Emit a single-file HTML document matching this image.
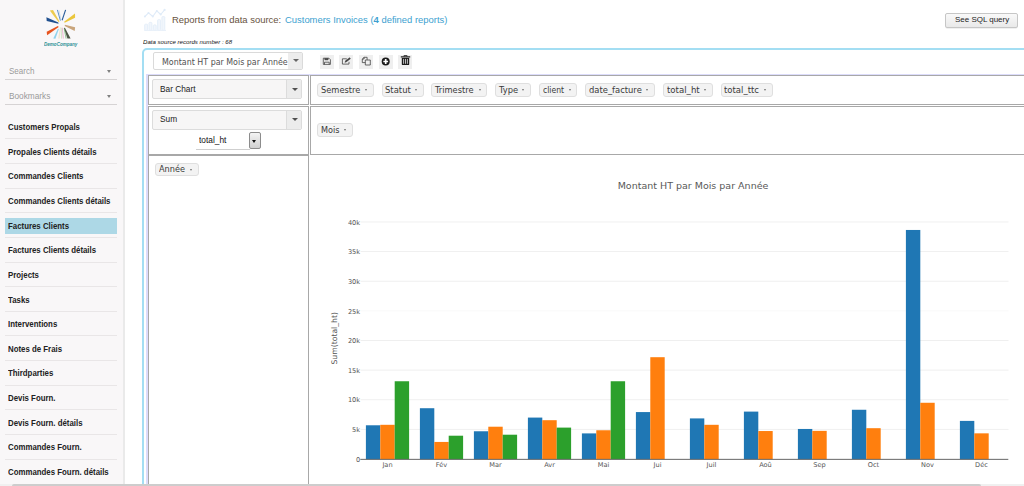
<!DOCTYPE html>
<html lang="fr"><head><meta charset="utf-8"><title>Reports</title><style>
html,body{margin:0;padding:0;}
body{width:1024px;height:486px;overflow:hidden;background:#fff;position:relative;font-family:"Liberation Sans",Arial,sans-serif;color:#222;}
.abs{position:absolute;}
#side{left:0;top:0;width:122.7px;height:486px;background:#f9f7f8;border-right:2.3px solid #eaeaea;}
.hl{position:absolute;left:4.7px;width:112.2px;height:15.7px;background:#add8e6;}
.sep{position:absolute;left:5px;width:112px;height:1px;background:#e9e6e7;}
.uline{position:absolute;left:4.5px;width:112.5px;height:1px;background:#d6d3d4;}
.caret{position:absolute;width:0;height:0;border-left:2.5px solid transparent;border-right:2.5px solid transparent;border-top:3px solid #808080;}
.t{position:absolute;white-space:nowrap;}
.cell{position:absolute;border:1px solid #a8a8a8;box-sizing:border-box;background:#fff;}
.combo{position:absolute;box-sizing:border-box;border:1px solid #dcdcdc;border-radius:2px;background:#f7f6f6;}
.combo .btn{position:absolute;right:0;top:0;bottom:0;width:14px;border-left:1px solid #dcdcdc;background:#ececec;border-radius:0 2px 2px 0;}
.tag{position:absolute;box-sizing:border-box;border:1px solid #dfdfdf;border-radius:3px;background:#f3f3f3;}
</style></head><body>
<div id="side" class="abs">
<svg class="abs" style="left:36px;top:4px" width="52" height="48" viewBox="36 4 52 48">
<polygon points="49.8,10.4 53.0,9.9 59.5,21.6 58.5,22.0" fill="#eccb4f"/>
<polygon points="46.4,17.3 46.7,21.0 58.5,23.8 58.3,22.4" fill="#20508f"/>
<polygon points="75.0,13.4 75.1,17.8 64.7,22.8 64.1,21.8" fill="#ebc63c"/>
<polygon points="75.1,27.2 74.7,30.9 64.7,25.9 64.9,24.8" fill="#c9a57c"/>
<polygon points="46.7,31.7 47.1,35.2 58.7,26.9 57.9,25.9" fill="#e8541e"/>
<polygon points="53.3,38.6 55.4,38.8 58.9,28.9 57.9,28.7" fill="#8fd3ee"/>
<polygon points="67.4,38.6 70.6,38.6 64.9,27.7 63.9,28.1" fill="#4d5646"/>
<polygon points="58.2,38.6 59.7,38.6 60.7,27.2 60.0,27.2" fill="#efe6cf"/>
<line x1="57.4" y1="9.9" x2="60.4" y2="20.6" stroke="#5b8fc9" stroke-width="1.0"/>
<line x1="65.6" y1="9.9" x2="62.1" y2="20.3" stroke="#2a5c9a" stroke-width="1.1"/>
<line x1="58.9" y1="10.1" x2="60.9" y2="19.8" stroke="#9fc4e6" stroke-width="0.5"/>
<line x1="62.3" y1="27.7" x2="63.3" y2="38.6" stroke="#e79cc0" stroke-width="0.7"/>
<line x1="61.2" y1="27.7" x2="61.5" y2="38.6" stroke="#b8d9a8" stroke-width="0.6"/>
<line x1="64.2" y1="28.7" x2="66.1" y2="38.6" stroke="#5aa05a" stroke-width="0.6"/>
</svg>
<div class="t" style="left:44.0px;top:41.20px;font-family:'Liberation Sans',Arial,sans-serif;font-size:5.2px;line-height:6.8px;letter-spacing:0.000px;color:#2f9296;font-weight:bold;font-style:italic;transform:scaleX(0.8775);transform-origin:0 50%;">DemoCompany</div>
<div class="t" style="left:8.7px;top:67.45px;font-family:'Liberation Sans',Arial,sans-serif;font-size:8.2px;line-height:10.7px;letter-spacing:0.000px;color:#9a9a9a;font-weight:normal;font-style:normal;transform:scaleX(0.9787);transform-origin:0 50%;">Search</div>
<div class="caret" style="left:107.3px;top:70.3px"></div><div class="uline" style="top:79.1px"></div>
<div class="t" style="left:8.7px;top:92.05px;font-family:'Liberation Sans',Arial,sans-serif;font-size:8.2px;line-height:10.7px;letter-spacing:0.000px;color:#9a9a9a;font-weight:normal;font-style:normal;transform:scaleX(1.0109);transform-origin:0 50%;">Bookmarks</div>
<div class="caret" style="left:107.3px;top:95.0px"></div><div class="uline" style="top:103.8px"></div>
<div class="t" style="left:8.4px;top:122.10px;font-family:'Liberation Sans',Arial,sans-serif;font-size:8.4px;line-height:10.9px;letter-spacing:0.000px;color:#222;font-weight:bold;font-style:normal;transform:scaleX(0.9370);transform-origin:0 50%;">Customers Propals</div>
<div class="sep" style="top:138.40px"></div>
<div class="t" style="left:8.4px;top:146.73px;font-family:'Liberation Sans',Arial,sans-serif;font-size:8.4px;line-height:10.9px;letter-spacing:0.000px;color:#222;font-weight:bold;font-style:normal;transform:scaleX(0.9370);transform-origin:0 50%;">Propales Clients détails</div>
<div class="sep" style="top:163.03px"></div>
<div class="t" style="left:8.4px;top:171.36px;font-family:'Liberation Sans',Arial,sans-serif;font-size:8.4px;line-height:10.9px;letter-spacing:0.000px;color:#222;font-weight:bold;font-style:normal;transform:scaleX(0.9370);transform-origin:0 50%;">Commandes Clients</div>
<div class="sep" style="top:187.66px"></div>
<div class="t" style="left:8.4px;top:195.99px;font-family:'Liberation Sans',Arial,sans-serif;font-size:8.4px;line-height:10.9px;letter-spacing:0.000px;color:#222;font-weight:bold;font-style:normal;transform:scaleX(0.9370);transform-origin:0 50%;">Commandes Clients détails</div>
<div class="sep" style="top:212.29px"></div>
<div class="hl" style="top:217.92px"></div>
<div class="t" style="left:8.4px;top:220.62px;font-family:'Liberation Sans',Arial,sans-serif;font-size:8.4px;line-height:10.9px;letter-spacing:0.000px;color:#222;font-weight:bold;font-style:normal;transform:scaleX(0.9370);transform-origin:0 50%;">Factures Clients</div>
<div class="sep" style="top:236.92px"></div>
<div class="t" style="left:8.4px;top:245.25px;font-family:'Liberation Sans',Arial,sans-serif;font-size:8.4px;line-height:10.9px;letter-spacing:0.000px;color:#222;font-weight:bold;font-style:normal;transform:scaleX(0.9370);transform-origin:0 50%;">Factures Clients détails</div>
<div class="sep" style="top:261.55px"></div>
<div class="t" style="left:8.4px;top:269.88px;font-family:'Liberation Sans',Arial,sans-serif;font-size:8.4px;line-height:10.9px;letter-spacing:0.000px;color:#222;font-weight:bold;font-style:normal;transform:scaleX(0.9370);transform-origin:0 50%;">Projects</div>
<div class="sep" style="top:286.18px"></div>
<div class="t" style="left:8.4px;top:294.51px;font-family:'Liberation Sans',Arial,sans-serif;font-size:8.4px;line-height:10.9px;letter-spacing:0.000px;color:#222;font-weight:bold;font-style:normal;transform:scaleX(0.9370);transform-origin:0 50%;">Tasks</div>
<div class="sep" style="top:310.81px"></div>
<div class="t" style="left:8.4px;top:319.14px;font-family:'Liberation Sans',Arial,sans-serif;font-size:8.4px;line-height:10.9px;letter-spacing:0.000px;color:#222;font-weight:bold;font-style:normal;transform:scaleX(0.9370);transform-origin:0 50%;">Interventions</div>
<div class="sep" style="top:335.44px"></div>
<div class="t" style="left:8.4px;top:343.77px;font-family:'Liberation Sans',Arial,sans-serif;font-size:8.4px;line-height:10.9px;letter-spacing:0.000px;color:#222;font-weight:bold;font-style:normal;transform:scaleX(0.9370);transform-origin:0 50%;">Notes de Frais</div>
<div class="sep" style="top:360.07px"></div>
<div class="t" style="left:8.4px;top:368.40px;font-family:'Liberation Sans',Arial,sans-serif;font-size:8.4px;line-height:10.9px;letter-spacing:0.000px;color:#222;font-weight:bold;font-style:normal;transform:scaleX(0.9370);transform-origin:0 50%;">Thirdparties</div>
<div class="sep" style="top:384.70px"></div>
<div class="t" style="left:8.4px;top:393.03px;font-family:'Liberation Sans',Arial,sans-serif;font-size:8.4px;line-height:10.9px;letter-spacing:0.000px;color:#222;font-weight:bold;font-style:normal;transform:scaleX(0.9370);transform-origin:0 50%;">Devis Fourn.</div>
<div class="sep" style="top:409.33px"></div>
<div class="t" style="left:8.4px;top:417.66px;font-family:'Liberation Sans',Arial,sans-serif;font-size:8.4px;line-height:10.9px;letter-spacing:0.000px;color:#222;font-weight:bold;font-style:normal;transform:scaleX(0.9370);transform-origin:0 50%;">Devis Fourn. détails</div>
<div class="sep" style="top:433.96px"></div>
<div class="t" style="left:8.4px;top:442.29px;font-family:'Liberation Sans',Arial,sans-serif;font-size:8.4px;line-height:10.9px;letter-spacing:0.000px;color:#222;font-weight:bold;font-style:normal;transform:scaleX(0.9370);transform-origin:0 50%;">Commandes Fourn.</div>
<div class="sep" style="top:458.59px"></div>
<div class="t" style="left:8.4px;top:466.92px;font-family:'Liberation Sans',Arial,sans-serif;font-size:8.4px;line-height:10.9px;letter-spacing:0.000px;color:#222;font-weight:bold;font-style:normal;transform:scaleX(0.9370);transform-origin:0 50%;">Commandes Fourn. détails</div>
</div>
<svg class="abs" style="left:138px;top:4px" width="40" height="32" viewBox="138 4 40 32">
<g fill="#f1f6fc" stroke="#e3edf8" stroke-width="0.9">
<rect x="144.7" y="24.2" width="2.9" height="6.2" rx="0.8"/>
<rect x="149.0" y="22.4" width="2.9" height="8" rx="0.8"/>
<rect x="153.3" y="24.9" width="2.9" height="5.5" rx="0.8"/>
<rect x="157.6" y="19.6" width="2.9" height="10.8" rx="0.8"/>
<rect x="161.9" y="16.6" width="2.9" height="13.8" rx="0.8"/>
</g>
<rect x="144.2" y="30.0" width="21.8" height="0.9" fill="#e8f0f9"/>
<polyline points="144.9,16.5 148.5,12.9 152.8,16.5 156.8,10.9 160.7,14.5 164.6,9.9" fill="none" stroke="#dfebf8" stroke-width="1.1" stroke-linejoin="round"/>
<g fill="#dfebf8"><circle cx="144.9" cy="16.5" r="1"/><circle cx="148.5" cy="12.9" r="1"/><circle cx="152.8" cy="16.5" r="1"/><circle cx="156.8" cy="10.9" r="1"/><circle cx="160.7" cy="14.5" r="1"/><circle cx="164.6" cy="9.9" r="1.1"/></g>
</svg>
<div class="t" style="left:172.0px;top:13.75px;font-family:'Liberation Sans',Arial,sans-serif;font-size:9.5px;line-height:12.3px;letter-spacing:0.000px;color:#685240;font-weight:normal;font-style:normal;transform:scaleX(0.9943);transform-origin:0 50%;">Reports from data source:</div>
<div class="t" style="left:284.8px;top:13.75px;font-family:'Liberation Sans',Arial,sans-serif;font-size:9.5px;line-height:12.3px;letter-spacing:0.000px;color:#3d9fd0;font-weight:normal;font-style:normal;transform:scaleX(0.9921);transform-origin:0 50%;">Customers Invoices (<b>4</b> defined reports)</div>
<div class="t" style="left:142.9px;top:38.25px;font-family:'Liberation Sans',Arial,sans-serif;font-size:6.1px;line-height:7.9px;letter-spacing:0.000px;color:#111;font-weight:normal;font-style:italic;transform:scaleX(1.0001);transform-origin:0 50%;">Data source records number : 68</div>
<div class="abs" style="left:945.3px;top:13px;width:72.6px;height:14.5px;box-sizing:border-box;border:1px solid #c6c6c6;box-shadow:0 0.5px 0.5px rgba(0,0,0,0.12);border-radius:2px;background:linear-gradient(#f9f9f9,#e9e9e9)"></div>
<div class="t" style="left:954.8px;top:15.10px;font-family:'Liberation Sans',Arial,sans-serif;font-size:8.0px;line-height:10.4px;letter-spacing:0.000px;color:#222;font-weight:normal;font-style:normal;transform:scaleX(0.9962);transform-origin:0 50%;">See SQL query</div>
<div class="abs" style="left:142px;top:48px;width:900px;height:460px;box-sizing:border-box;border:2px solid #a3def3;border-radius:5px;background:#fff"></div>
<div class="abs" style="left:153px;top:52px;width:150.2px;height:17.8px;box-sizing:border-box;border:1px solid #dadada;border-radius:2px;background:#fff"></div>
<div class="abs" style="left:288.3px;top:53px;width:13.9px;height:15.8px;background:#ededed;border-radius:0 1px 1px 0"></div>
<div class="abs" style="left:155px;top:53px;width:133.3px;height:15.8px;overflow:hidden"><div class="t" style="left:7.2px;top:4.25px;font-family:'DejaVu Sans',Verdana,sans-serif;font-size:8.1px;line-height:10.5px;letter-spacing:0.000px;color:#505050;font-weight:normal;font-style:normal;transform:scaleX(0.9789);transform-origin:0 50%;">Montant HT par Mois par Année</div></div>
<div class="caret" style="left:293.3px;top:59.2px;border-top-color:#666;border-left-width:3.2px;border-right-width:3.2px;border-top-width:3.4px"></div>
<div class="abs" style="left:319.6px;top:54.7px;width:14.3px;height:14px;background:#efefef"></div>
<div class="abs" style="left:339.4px;top:54.7px;width:13.7px;height:14px;background:#efefef"></div>
<div class="abs" style="left:359.2px;top:54.7px;width:13.7px;height:14px;background:#efefef"></div>
<div class="abs" style="left:379.0px;top:54.7px;width:13.7px;height:14px;background:#efefef"></div>
<div class="abs" style="left:398.1px;top:54.7px;width:14.1px;height:14px;background:#efefef"></div>
<svg class="abs" style="left:316px;top:50px" width="100" height="22" viewBox="316 50 100 22">
<g fill="none" stroke="#3a3a3a" stroke-width="0.75" stroke-linejoin="round">
<path d="M323.3 58.2h5.6l1.5 1.5v4.7h-7.1z"/>
<path d="M324.8 58.2v1.7h3.3v-1.7" fill="#444" stroke-width="0.5"/>
<path d="M324.5 64.4v-2.2h4.7v2.2"/>
<path d="M349 61.8v2.3h-6.6v-5.3h4.4"/>
<path d="M344.8 62.5l.5-1.7 4.3-3.2 1 1.1-4.2 3.2z" fill="#444" stroke-width="0.2"/>
<path d="M365.3 60h5v5h-5z" fill="#efefef"/>
<path d="M365.3 62.6h-3V59l1.8-1.7h3v2.6"/>
<path d="M362.3 59h1.8v-1.7"/>
</g>
<circle cx="385.7" cy="61.5" r="4" fill="#1a1a1a"/>
<path d="M385.7 59.1v4.8M383.3 61.5h4.8" stroke="#fff" stroke-width="1.7"/>
<g fill="#1a1a1a">
<rect x="400.8" y="56.3" width="9.4" height="1.2"/>
<path d="M403.7 56.4v-1.2h3.6v1.2h-.9v-.5h-1.8v.5z"/>
<path d="M401.8 58h7.4v6.2q0 .9-.9.9h-5.6q-.9 0-.9-.9z"/>
</g>
<path d="M403.6 58.9v4.9M405.5 58.9v4.9M407.4 58.9v4.9" stroke="#dcdcdc" stroke-width="0.85"/>
</svg>
<div class="abs" style="left:146px;top:74px;width:900px;height:1.6px;background:#dcdcfb"></div>
<div class="abs" style="left:146px;top:74px;width:2px;height:420px;background:#dcdcfb"></div>
<div class="cell" style="left:148px;top:75.4px;width:161px;height:29.2px"></div>
<div class="cell" style="left:310px;top:75.4px;width:730px;height:29.2px"></div>
<div class="cell" style="left:148px;top:105.5px;width:161px;height:49px"></div>
<div class="cell" style="left:310px;top:105.5px;width:730px;height:49px"></div>
<div class="cell" style="left:148px;top:155.2px;width:161px;height:340px"></div>
<div class="combo" style="left:152px;top:79.2px;width:150px;height:19.7px"><div class="btn"></div><div class="caret" style="left:138.5px;top:7.4px;border-top-color:#505050;border-left-width:3.5px;border-right-width:3.5px;border-top-width:3.7px"></div></div>
<div class="t" style="left:159.9px;top:83.80px;font-family:'Liberation Sans',Arial,sans-serif;font-size:8.3px;line-height:10.8px;letter-spacing:0.000px;color:#222;font-weight:normal;font-style:normal;transform:scaleX(1.0001);transform-origin:0 50%;">Bar Chart</div>
<div class="combo" style="left:152px;top:109.9px;width:150px;height:19.7px"><div class="btn"></div><div class="caret" style="left:138.5px;top:7.4px;border-top-color:#505050;border-left-width:3.5px;border-right-width:3.5px;border-top-width:3.7px"></div></div>
<div class="t" style="left:159.9px;top:113.90px;font-family:'Liberation Sans',Arial,sans-serif;font-size:8.3px;line-height:10.8px;letter-spacing:0.000px;color:#222;font-weight:normal;font-style:normal;transform:scaleX(1.0001);transform-origin:0 50%;">Sum</div>
<div class="t" style="left:198.6px;top:135.10px;font-family:'Liberation Sans',Arial,sans-serif;font-size:8.3px;line-height:10.8px;letter-spacing:0.000px;color:#111;font-weight:normal;font-style:normal;transform:scaleX(1.0067);transform-origin:0 50%;">total_ht</div>
<div class="abs" style="left:195.5px;top:148.7px;width:54px;height:1px;background:#cfcfcf"></div>
<div class="abs" style="left:249.2px;top:132.3px;width:11.5px;height:17px;box-sizing:border-box;border:1px solid #8c8c8c;border-radius:2px;background:linear-gradient(#f4f4f4,#d0d0d0)"><div class="caret" style="left:1.9px;top:6.4px;border-top-color:#111;border-left-width:2.9px;border-right-width:2.9px;border-top-width:3.2px"></div></div>
<div class="tag" style="left:317.0px;top:83.3px;width:56.7px;height:13.4px"></div><div class="t" style="left:321.0px;top:84.85px;font-family:'DejaVu Sans',Verdana,sans-serif;font-size:8.2px;line-height:10.7px;letter-spacing:0.000px;color:#3a3a3a;font-weight:normal;font-style:normal;transform:scaleX(1.0115);transform-origin:0 50%;">Semestre</div><div class="caret" style="left:364.6px;top:89.1px;border-top-color:#707070;border-left-width:1.9px;border-right-width:1.9px;border-top-width:2.4px"></div>
<div class="tag" style="left:381.5px;top:83.3px;width:42.2px;height:13.4px"></div><div class="t" style="left:385.0px;top:84.85px;font-family:'DejaVu Sans',Verdana,sans-serif;font-size:8.2px;line-height:10.7px;letter-spacing:0.000px;color:#3a3a3a;font-weight:normal;font-style:normal;transform:scaleX(1.0301);transform-origin:0 50%;">Statut</div><div class="caret" style="left:414.7px;top:89.1px;border-top-color:#707070;border-left-width:1.9px;border-right-width:1.9px;border-top-width:2.4px"></div>
<div class="tag" style="left:431.2px;top:83.3px;width:56.2px;height:13.4px"></div><div class="t" style="left:434.7px;top:84.85px;font-family:'DejaVu Sans',Verdana,sans-serif;font-size:8.2px;line-height:10.7px;letter-spacing:0.000px;color:#3a3a3a;font-weight:normal;font-style:normal;transform:scaleX(1.0116);transform-origin:0 50%;">Trimestre</div><div class="caret" style="left:478.5px;top:89.1px;border-top-color:#707070;border-left-width:1.9px;border-right-width:1.9px;border-top-width:2.4px"></div>
<div class="tag" style="left:494.9px;top:83.3px;width:36.6px;height:13.4px"></div><div class="t" style="left:498.9px;top:84.85px;font-family:'DejaVu Sans',Verdana,sans-serif;font-size:8.2px;line-height:10.7px;letter-spacing:0.000px;color:#3a3a3a;font-weight:normal;font-style:normal;transform:scaleX(1.0206);transform-origin:0 50%;">Type</div><div class="caret" style="left:522.3px;top:89.1px;border-top-color:#707070;border-left-width:1.9px;border-right-width:1.9px;border-top-width:2.4px"></div>
<div class="tag" style="left:539.4px;top:83.3px;width:38.1px;height:13.4px"></div><div class="t" style="left:542.7px;top:84.85px;font-family:'DejaVu Sans',Verdana,sans-serif;font-size:8.2px;line-height:10.7px;letter-spacing:0.000px;color:#3a3a3a;font-weight:normal;font-style:normal;transform:scaleX(0.9378);transform-origin:0 50%;">client</div><div class="caret" style="left:568.5px;top:89.1px;border-top-color:#707070;border-left-width:1.9px;border-right-width:1.9px;border-top-width:2.4px"></div>
<div class="tag" style="left:585.1px;top:83.3px;width:69.8px;height:13.4px"></div><div class="t" style="left:588.9px;top:84.85px;font-family:'DejaVu Sans',Verdana,sans-serif;font-size:8.2px;line-height:10.7px;letter-spacing:0.000px;color:#3a3a3a;font-weight:normal;font-style:normal;transform:scaleX(1.0234);transform-origin:0 50%;">date_facture</div><div class="caret" style="left:646.4px;top:89.1px;border-top-color:#707070;border-left-width:1.9px;border-right-width:1.9px;border-top-width:2.4px"></div>
<div class="tag" style="left:662.8px;top:83.3px;width:50.0px;height:13.4px"></div><div class="t" style="left:666.9px;top:84.85px;font-family:'DejaVu Sans',Verdana,sans-serif;font-size:8.2px;line-height:10.7px;letter-spacing:0.000px;color:#3a3a3a;font-weight:normal;font-style:normal;transform:scaleX(1.0474);transform-origin:0 50%;">total_ht</div><div class="caret" style="left:704.1px;top:89.1px;border-top-color:#707070;border-left-width:1.9px;border-right-width:1.9px;border-top-width:2.4px"></div>
<div class="tag" style="left:720.5px;top:83.3px;width:52.0px;height:13.4px"></div><div class="t" style="left:724.3px;top:84.85px;font-family:'DejaVu Sans',Verdana,sans-serif;font-size:8.2px;line-height:10.7px;letter-spacing:0.000px;color:#3a3a3a;font-weight:normal;font-style:normal;transform:scaleX(1.0370);transform-origin:0 50%;">total_ttc</div><div class="caret" style="left:763.8px;top:89.1px;border-top-color:#707070;border-left-width:1.9px;border-right-width:1.9px;border-top-width:2.4px"></div>
<div class="tag" style="left:316.9px;top:123.4px;width:35.7px;height:13.2px"></div><div class="t" style="left:320.7px;top:124.85px;font-family:'DejaVu Sans',Verdana,sans-serif;font-size:8.2px;line-height:10.7px;letter-spacing:0.000px;color:#3a3a3a;font-weight:normal;font-style:normal;transform:scaleX(0.9933);transform-origin:0 50%;">Mois</div><div class="caret" style="left:343.6px;top:129.1px;border-top-color:#707070;border-left-width:1.9px;border-right-width:1.9px;border-top-width:2.4px"></div>
<div class="tag" style="left:155.2px;top:162.8px;width:43.4px;height:13.2px"></div><div class="t" style="left:159.2px;top:164.25px;font-family:'DejaVu Sans',Verdana,sans-serif;font-size:8.2px;line-height:10.7px;letter-spacing:0.000px;color:#3a3a3a;font-weight:normal;font-style:normal;transform:scaleX(0.9976);transform-origin:0 50%;">Année</div><div class="caret" style="left:189.7px;top:168.5px;border-top-color:#707070;border-left-width:1.9px;border-right-width:1.9px;border-top-width:2.4px"></div>
<svg class="abs" style="left:310px;top:160px" width="714" height="326" viewBox="310 160 714 326" font-family="'DejaVu Sans',Verdana,sans-serif"><rect x="360.5" y="428.92" width="648" height="0.9" fill="#eeeeee"/><rect x="360.5" y="399.29" width="648" height="0.9" fill="#eeeeee"/><rect x="360.5" y="369.66" width="648" height="0.9" fill="#eeeeee"/><rect x="360.5" y="340.03" width="648" height="0.9" fill="#eeeeee"/><rect x="360.5" y="310.40" width="648" height="0.9" fill="#f8f8f8"/><rect x="360.5" y="280.77" width="648" height="0.9" fill="#eeeeee"/><rect x="360.5" y="251.14" width="648" height="0.9" fill="#eeeeee"/><rect x="360.5" y="221.51" width="648" height="0.9" fill="#eeeeee"/><text x="360.1" y="461.70" text-anchor="end" font-size="6.6" fill="#555">0</text><text x="360.1" y="432.07" text-anchor="end" font-size="6.6" fill="#555">5k</text><text x="360.1" y="402.44" text-anchor="end" font-size="6.6" fill="#555">10k</text><text x="360.1" y="372.81" text-anchor="end" font-size="6.6" fill="#555">15k</text><text x="360.1" y="343.18" text-anchor="end" font-size="6.6" fill="#555">20k</text><text x="360.1" y="313.55" text-anchor="end" font-size="6.6" fill="#555">25k</text><text x="360.1" y="283.92" text-anchor="end" font-size="6.6" fill="#555">30k</text><text x="360.1" y="254.29" text-anchor="end" font-size="6.6" fill="#555">35k</text><text x="360.1" y="224.66" text-anchor="end" font-size="6.6" fill="#555">40k</text><rect x="365.90" y="425.28" width="14.4" height="34.02" fill="#1f77b4"/><rect x="380.30" y="424.81" width="14.4" height="34.49" fill="#ff7f0e"/><rect x="394.70" y="381.25" width="14.4" height="78.05" fill="#2ca02c"/><text x="387.50" y="466.9" text-anchor="middle" font-size="6.6" fill="#555">Jan</text><rect x="419.90" y="408.22" width="14.4" height="51.08" fill="#1f77b4"/><rect x="434.30" y="441.94" width="14.4" height="17.36" fill="#ff7f0e"/><rect x="448.70" y="435.71" width="14.4" height="23.59" fill="#2ca02c"/><text x="441.50" y="466.9" text-anchor="middle" font-size="6.6" fill="#555">Fév</text><rect x="473.90" y="431.27" width="14.4" height="28.03" fill="#1f77b4"/><rect x="488.30" y="426.71" width="14.4" height="32.59" fill="#ff7f0e"/><rect x="502.70" y="434.71" width="14.4" height="24.59" fill="#2ca02c"/><text x="495.50" y="466.9" text-anchor="middle" font-size="6.6" fill="#555">Mar</text><rect x="527.90" y="417.58" width="14.4" height="41.72" fill="#1f77b4"/><rect x="542.30" y="420.19" width="14.4" height="39.11" fill="#ff7f0e"/><rect x="556.70" y="427.60" width="14.4" height="31.70" fill="#2ca02c"/><text x="549.50" y="466.9" text-anchor="middle" font-size="6.6" fill="#555">Avr</text><rect x="581.90" y="433.40" width="14.4" height="25.90" fill="#1f77b4"/><rect x="596.30" y="430.26" width="14.4" height="29.04" fill="#ff7f0e"/><rect x="610.70" y="381.25" width="14.4" height="78.05" fill="#2ca02c"/><text x="603.50" y="466.9" text-anchor="middle" font-size="6.6" fill="#555">Mai</text><rect x="635.90" y="412.07" width="14.4" height="47.23" fill="#1f77b4"/><rect x="650.30" y="357.20" width="14.4" height="102.10" fill="#ff7f0e"/><text x="657.50" y="466.9" text-anchor="middle" font-size="6.6" fill="#555">Jui</text><rect x="689.90" y="418.41" width="14.4" height="40.89" fill="#1f77b4"/><rect x="704.30" y="424.81" width="14.4" height="34.49" fill="#ff7f0e"/><text x="711.50" y="466.9" text-anchor="middle" font-size="6.6" fill="#555">Juil</text><rect x="743.90" y="411.60" width="14.4" height="47.70" fill="#1f77b4"/><rect x="758.30" y="431.03" width="14.4" height="28.27" fill="#ff7f0e"/><text x="765.50" y="466.9" text-anchor="middle" font-size="6.6" fill="#555">Aoû</text><rect x="797.90" y="428.96" width="14.4" height="30.34" fill="#1f77b4"/><rect x="812.30" y="430.86" width="14.4" height="28.44" fill="#ff7f0e"/><text x="819.50" y="466.9" text-anchor="middle" font-size="6.6" fill="#555">Sep</text><rect x="851.90" y="409.76" width="14.4" height="49.54" fill="#1f77b4"/><rect x="866.30" y="428.19" width="14.4" height="31.11" fill="#ff7f0e"/><text x="873.50" y="466.9" text-anchor="middle" font-size="6.6" fill="#555">Oct</text><rect x="905.90" y="229.96" width="14.4" height="229.34" fill="#1f77b4"/><rect x="920.30" y="402.77" width="14.4" height="56.53" fill="#ff7f0e"/><text x="927.50" y="466.9" text-anchor="middle" font-size="6.6" fill="#555">Nov</text><rect x="959.90" y="420.90" width="14.4" height="38.40" fill="#1f77b4"/><rect x="974.30" y="433.34" width="14.4" height="25.96" fill="#ff7f0e"/><text x="981.50" y="466.9" text-anchor="middle" font-size="6.6" fill="#555">Déc</text><rect x="360.3" y="458.85" width="648" height="1" fill="#666"/><text x="693" y="188.7" text-anchor="middle" font-size="9.5" fill="#585858">Montant HT par Mois par Année</text><text transform="translate(337.4,338.3) rotate(-90)" text-anchor="middle" font-size="7.7" fill="#555">Sum(total_ht)</text></svg>
<div class="abs" style="left:0;top:484px;width:1024px;height:3px;background:#f0f0f0"></div><div class="abs" style="left:12px;top:484px;width:969px;height:3px;background:#cdcdcd;border-radius:2px 2px 0 0"></div>
</body></html>
